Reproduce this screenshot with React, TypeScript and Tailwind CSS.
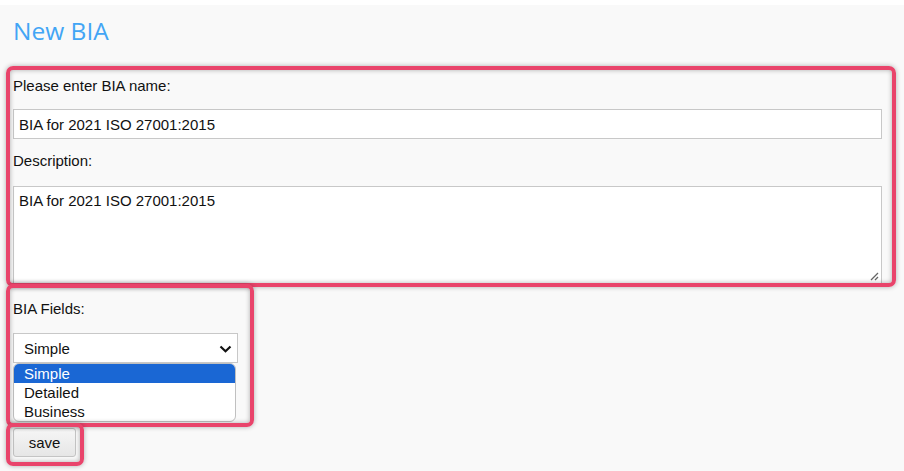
import React from "react";

const RED = "border-[#e9446b]";

export default function App() {
  return (
    <div className="w-[904px] h-[471px] bg-white pt-[5px] overflow-hidden" style={{ fontFamily: '"Liberation Sans", Arial, sans-serif' }}>
      <div className="relative h-[466px] bg-[#f9f9f9] px-[13px] text-[15px] leading-[17px] text-[#111]">
        <h1 className="pt-[10px] text-[24.5px] leading-[32px] text-[#42a5f5] font-normal" style={{ fontFamily: '"Open Sans", sans-serif' }}>
          New BIA
        </h1>

        <div className="mt-[30px]">Please enter BIA name:</div>
        <input
          readOnly
          value="BIA for 2021 ISO 27001:2015"
          className="mt-[15px] block w-[869px] h-[30px] border border-[#c8c8c8] bg-white px-[5px] text-[15px] text-[#111] outline-none"
        />
        <div className="mt-[13px]">Description:</div>
        <div className="relative mt-[17px] w-[869px] h-[98px] border border-[#c8c8c8] bg-white px-[5px] pt-[5px]">
          BIA for 2021 ISO 27001:2015
          <svg className="absolute right-[2px] bottom-[2px]" width="10" height="10" viewBox="0 0 10 10">
            <path d="M9 2 L2 9 M9 6 L6 9" stroke="#666" strokeWidth="1.3" />
          </svg>
        </div>

        <div className="mt-[16px]">BIA Fields:</div>
        <div className="relative mt-[16px] w-[225px] h-[30px] border border-[#c8c8c8] bg-white pl-[10px] flex items-center">
          <span>Simple</span>
          <svg className="absolute right-[5px] top-[11px]" width="13" height="8" viewBox="0 0 13 8">
            <path d="M1.5 1.5 L6.5 6.2 L11.5 1.5" stroke="#111" strokeWidth="2.2" fill="none" />
          </svg>
        </div>
        <div className="w-[223px] h-[59px] border border-[#c0c0c0] bg-white rounded-[6px] overflow-hidden">
          <div className="h-[19px] bg-[#1a67d4] text-white pl-[10px] leading-[19px]">Simple</div>
          <div className="h-[19px] pl-[10px] leading-[19px]">Detailed</div>
          <div className="h-[19px] pl-[10px] leading-[19px]">Business</div>
        </div>

        <button className="mt-[6px] block w-[63px] h-[29px] border border-[#c4c4c4] rounded-[3px] bg-gradient-to-b from-[#f6f6f6] to-[#e6e6e6] text-[15px] text-[#111]">
          save
        </button>

        <div className={`absolute left-[6px] top-[61px] w-[890px] h-[221px] border-4 ${RED} rounded-[7px] shadow-[0_0_5px_rgba(0,0,0,0.3),inset_0_0_5px_rgba(0,0,0,0.3)]`} />
        <div className={`absolute left-[6px] top-[279px] w-[248px] h-[143px] border-4 ${RED} rounded-[7px] shadow-[0_0_5px_rgba(0,0,0,0.3),inset_0_0_5px_rgba(0,0,0,0.3)]`} />
        <div className={`absolute left-[6px] top-[418px] w-[78px] h-[43px] border-4 ${RED} rounded-[7px] shadow-[0_0_5px_rgba(0,0,0,0.3),inset_0_0_5px_rgba(0,0,0,0.3)]`} />
      </div>
    </div>
  );
}
